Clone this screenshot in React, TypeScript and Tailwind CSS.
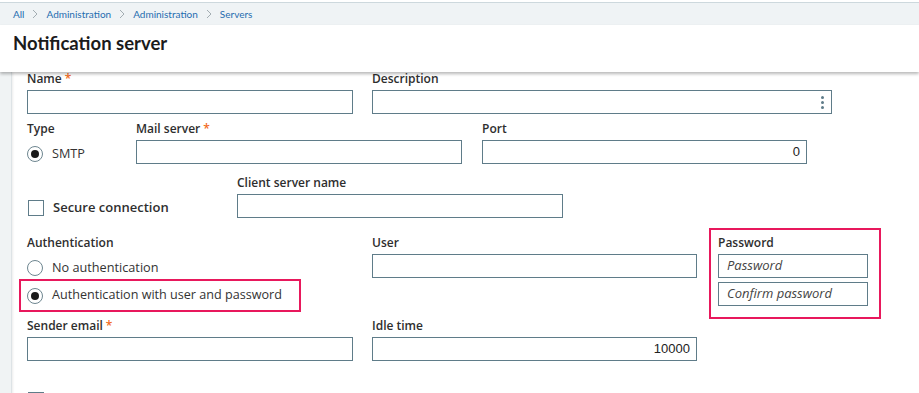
import React from 'react';

const label = "block h-[14px] leading-[14px] text-[12px] font-semibold text-[#2e2e2e] whitespace-nowrap";
const box = "h-[24px] border border-[#5f7c89] bg-white";

function Req() {
  return <span className="text-[#f26a22] ml-[3px]">*</span>;
}

function Chevron() {
  return (
    <svg width="6" height="10" viewBox="0 0 6 10" className="shrink-0">
      <polyline points="1,1 5,5 1,9" fill="none" stroke="#a3adb2" strokeWidth="1" />
    </svg>
  );
}

function Radio({ checked }: { checked?: boolean }) {
  return (
    <span className="w-[16px] h-[16px] rounded-full border border-[#6e8690] bg-white flex items-center justify-center shrink-0">
      {checked && <span className="w-[8px] h-[8px] rounded-full bg-[#1a1a1a]" />}
    </span>
  );
}

function Field({ title, required, width, value, className }: { title: string; required?: boolean; width: string; value?: string; className?: string }) {
  return (
    <div className={className}>
      <span className={label}>
        {title}
        {required && <Req />}
      </span>
      <div className={`mt-[4px] ${box} ${width} flex items-center justify-end pr-[6px] font-['Liberation_Sans',sans-serif] text-[13px] text-[#222]`}>
        {value}
      </div>
    </div>
  );
}

export default function App() {
  return (
    <div className="w-[919px] h-[393px] overflow-hidden bg-white font-['Open_Sans',sans-serif] flex flex-col">
      <div className="mt-[2px] h-[23px] shrink-0 border-t border-[#cdd8dd] bg-[#eff3f5] flex items-center gap-[8px] pl-[13px] font-['Lato',sans-serif] text-[10px] text-[#1f6db0]">
        <span>All</span>
        <Chevron />
        <span>Administration</span>
        <Chevron />
        <span>Administration</span>
        <Chevron />
        <span>Servers</span>
      </div>

      <div className="relative z-10 h-[47px] shrink-0 bg-white pl-[13px] pt-[6px] shadow-[0_2px_3px_rgba(0,0,0,0.28)]">
        <h1 className="font-['Lato',sans-serif] font-bold text-[18.5px] leading-[24px] text-[#1b1b1b]">Notification server</h1>
      </div>

      <div className="flex flex-1">
        <div className="w-[12px] shrink-0 bg-[#f0f3f4] border-r border-[#dde3e6] shadow-[1px_0_2px_rgba(0,0,0,0.08)]" />

        <div className="pl-[15px] flex flex-col">
          {/* Name / Description */}
          <div className="flex gap-[19px]">
            <Field title="Name" required width="w-[326px]" />
            <div>
              <span className={label}>Description</span>
              <div className={`mt-[4px] ${box} w-[460px] flex items-center justify-end pr-[7px]`}>
                <div className="flex flex-col gap-[2px]">
                  <span className="w-[3px] h-[3px] rounded-full bg-[#5f7c89]" />
                  <span className="w-[3px] h-[3px] rounded-full bg-[#5f7c89]" />
                  <span className="w-[3px] h-[3px] rounded-full bg-[#5f7c89]" />
                </div>
              </div>
            </div>
          </div>

          {/* Type / Mail server / Port */}
          <div className="flex mt-[8px]">
            <div className="w-[109px]">
              <span className={label}>Type</span>
              <div className="mt-[10px] flex items-center gap-[9px] h-[16px] text-[12.7px] text-[#333]">
                <Radio checked />
                <span>SMTP</span>
              </div>
            </div>
            <Field title="Mail server" required width="w-[326px]" />
            <Field title="Port" width="w-[325px]" value="0" className="ml-[20px]" />
          </div>

          {/* Secure connection / Client server name */}
          <div className="flex mt-[12px]">
            <div className="w-[210px] pt-[24px] flex items-center gap-[9px] h-[40px]">
              <span className="ml-[1px] w-[16px] h-[16px] border border-[#5f7c89] bg-white shrink-0" />
              <span className="text-[13px] font-semibold text-[#2e2e2e]">Secure connection</span>
            </div>
            <Field title="Client server name" width="w-[326px]" />
          </div>

          {/* Authentication / User / Password */}
          <div className="flex mt-[18px] items-start">
            <div className="w-[345px]">
              <span className={label}>Authentication</span>
              <div className="mt-[10px] flex items-center gap-[9px] h-[16px] text-[12.7px] text-[#333]">
                <Radio />
                <span>No authentication</span>
              </div>
              <div className="mt-[3px] -ml-[8px] w-[282px] h-[33px] border-2 border-[#e8185c] pl-[6px] flex items-center gap-[9px] text-[12.6px] text-[#333]">
                <Radio checked />
                <span className="whitespace-nowrap">Authentication with user and password</span>
              </div>
            </div>
            <Field title="User" width="w-[325px]" />
            <div className="ml-[12px] -mt-[8px] w-[172px] border-2 border-[#e8185c] pl-[7px] pt-[6px] pb-[11px]">
              <span className={label}>Password</span>
              <div className={`mt-[4px] ${box} w-[150px] flex items-center pl-[8px] text-[13px] italic text-[#444]`}>Password</div>
              <div className={`mt-[4px] ${box} w-[150px] flex items-center pl-[8px] text-[13px] italic text-[#444]`}>Confirm password</div>
            </div>
          </div>

          {/* Sender email / Idle time */}
          <div className="flex gap-[19px]">
            <Field title="Sender email" required width="w-[326px]" />
            <Field title="Idle time" width="w-[325px]" value="10000" />
          </div>

          <div className="mt-[31px] ml-[1px] w-[16px] h-[16px] border border-[#5f7c89] shrink-0" />
        </div>
      </div>
    </div>
  );
}
